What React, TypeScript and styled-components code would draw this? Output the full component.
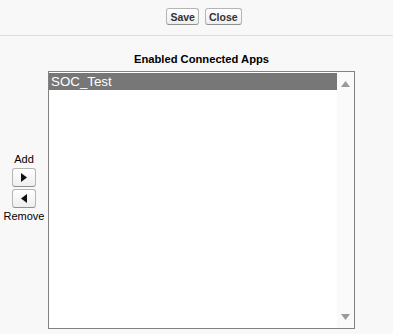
import React, { useState } from "react";
import styled, { createGlobalStyle } from "styled-components";

const GlobalStyle = createGlobalStyle`
  html, body {
    margin: 0;
    padding: 0;
    background: #f8f8f8;
    font-family: "Liberation Sans", Arial, sans-serif;
    color: #333;
  }
`;

const Page = styled.div`
  width: 393px;
  height: 334px;
  overflow: hidden;
  background: #f8f8f8;
`;

const ButtonBar = styled.div`
  display: flex;
  justify-content: center;
  gap: 6px;
  padding: 8px 0 0 15px;
  height: 27px;
  border-bottom: 1px solid #dddddd;
`;

const Btn = styled.button`
  font-family: "Liberation Sans", Arial, sans-serif;
  font-size: 10.5px;
  font-weight: bold;
  color: #333;
  height: 17px;
  padding: 0 3px;
  border: 1px solid #b5b5b5;
  border-bottom-color: #8f8f8f;
  border-radius: 3px;
  background: linear-gradient(#ffffff, #eeeeee);
  cursor: pointer;
`;

const Duel = styled.div`
  display: flex;
  align-items: center;
  padding-top: 17px;
`;

const Mover = styled.div`
  width: 48px;
  display: flex;
  flex-direction: column;
  align-items: center;
  gap: 2px;
  padding-bottom: 6px;
  font-size: 11px;
  color: #000;
`;

const MoveLabel = styled.div`
  line-height: 13px;
`;

const ArrowBtn = styled.button`
  width: 24px;
  height: 19px;
  padding: 0;
  display: flex;
  align-items: center;
  justify-content: center;
  border: 1px solid #b5b5b5;
  border-bottom-color: #8f8f8f;
  border-radius: 3px;
  background: linear-gradient(#ffffff, #eeeeee);
  cursor: pointer;

  svg {
    width: 6px;
    height: 9px;
    fill: #111;
  }
`;

const Column = styled.div`
  display: flex;
  flex-direction: column;
  align-items: center;
  width: 307px;
`;

const Heading = styled.div`
  font-size: 11.2px;
  font-weight: bold;
  color: #000;
  line-height: 13px;
  margin-bottom: 5px;
`;

const ListBox = styled.div`
  display: flex;
  width: 307px;
  height: 258px;
  box-sizing: border-box;
  border: 1px solid #828282;
  background: #fff;
`;

const Options = styled.div`
  flex: 1;
  padding-top: 1px;
`;

const Option = styled.div<{ $selected: boolean }>`
  font-size: 13.33px;
  line-height: 17px;
  padding-left: 2px;
  color: ${(p) => (p.$selected ? "#fff" : "#000")};
  background: ${(p) => (p.$selected ? "#777777" : "transparent")};
  cursor: default;
`;

const Scroll = styled.div`
  width: 17px;
  background: #fafafa;
  display: flex;
  flex-direction: column;
  justify-content: space-between;
  align-items: center;
  padding: 9px 0 8px;

  svg {
    width: 9px;
    height: 6px;
    fill: #9a9a9a;
  }
`;

export default function App() {
  const [selected, setSelected] = useState("SOC_Test");
  const apps = ["SOC_Test"];

  return (
    <Page>
      <GlobalStyle />
      <ButtonBar>
        <Btn>Save</Btn>
        <Btn>Close</Btn>
      </ButtonBar>
      <Duel>
        <Mover>
          <MoveLabel>Add</MoveLabel>
          <ArrowBtn title="Add">
            <svg viewBox="0 0 6 9">
              <path d="M0 0 L6 4.5 L0 9 Z" />
            </svg>
          </ArrowBtn>
          <ArrowBtn title="Remove">
            <svg viewBox="0 0 6 9">
              <path d="M6 0 L0 4.5 L6 9 Z" />
            </svg>
          </ArrowBtn>
          <MoveLabel>Remove</MoveLabel>
        </Mover>
        <Column>
          <Heading>Enabled Connected Apps</Heading>
          <ListBox>
            <Options>
              {apps.map((a) => (
                <Option key={a} $selected={selected === a} onClick={() => setSelected(a)}>
                  {a}
                </Option>
              ))}
            </Options>
            <Scroll>
              <svg viewBox="0 0 9 6">
                <path d="M4.5 0 L9 6 L0 6 Z" />
              </svg>
              <svg viewBox="0 0 9 6">
                <path d="M0 0 L9 0 L4.5 6 Z" />
              </svg>
            </Scroll>
          </ListBox>
        </Column>
      </Duel>
    </Page>
  );
}
